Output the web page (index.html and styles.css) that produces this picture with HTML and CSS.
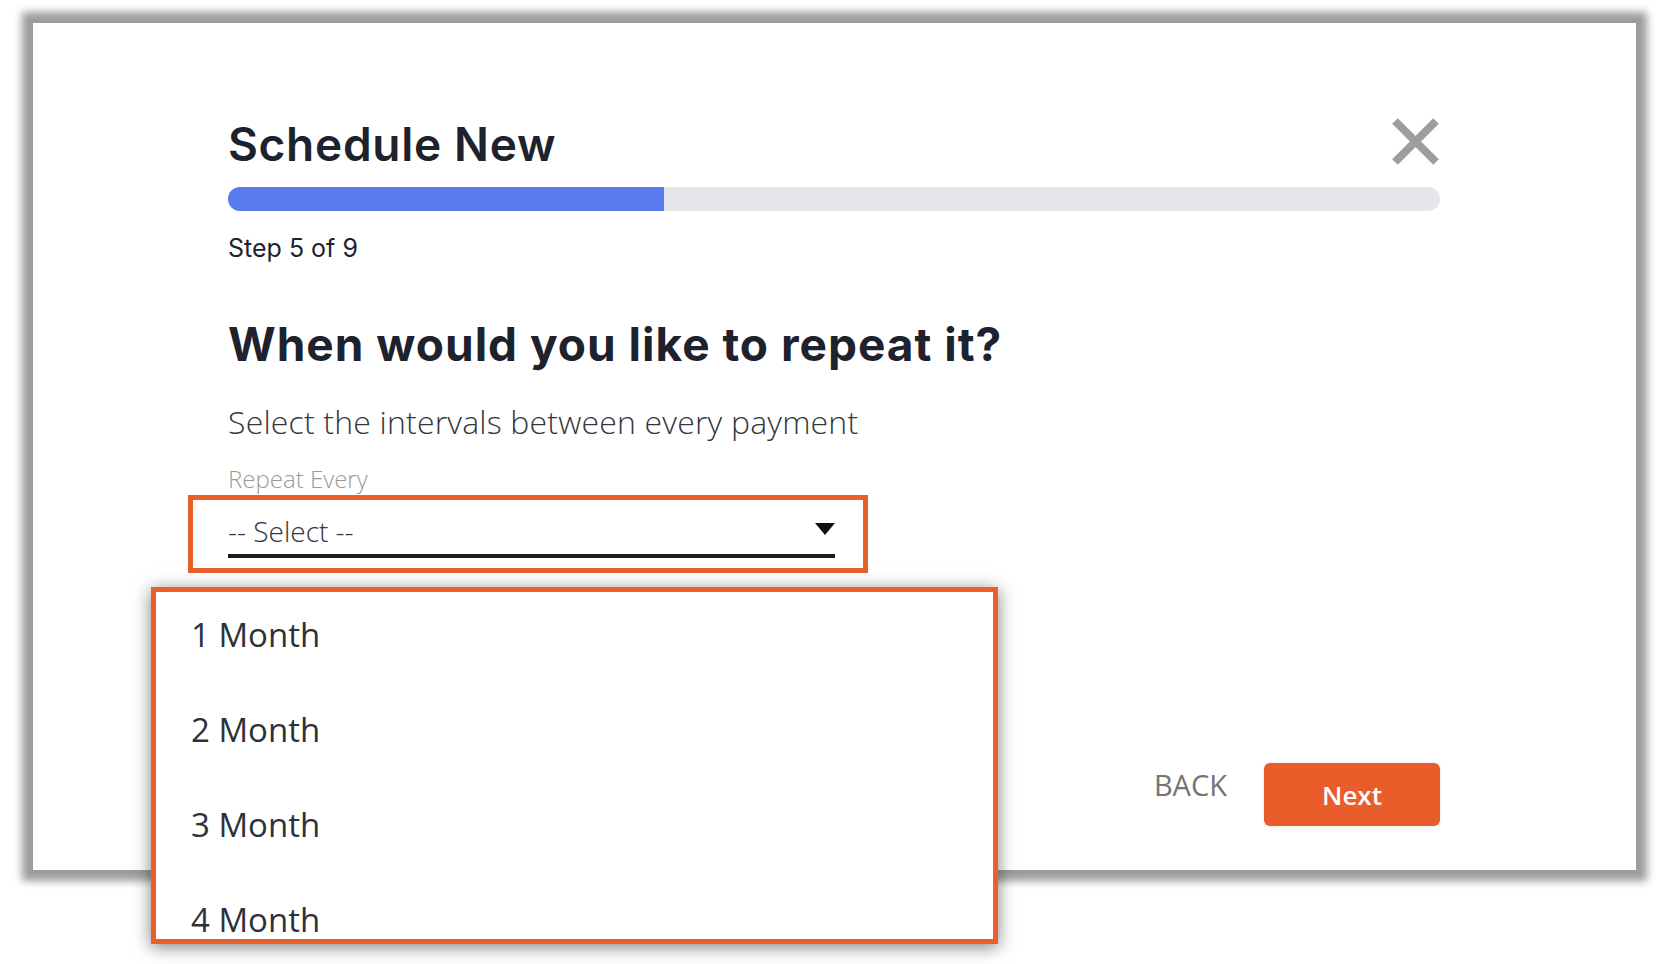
FILE: index.html
```html
<!DOCTYPE html>
<html lang="en">
<head>
  <meta charset="UTF-8" />
  <meta name="viewport" content="width=device-width, initial-scale=1.0"/>
  <title>Schedule New</title>
  <link rel="stylesheet" href="styles.css">
</head>
<body>

<div class="modal">
  <!-- Header -->
  <div class="modal-header">
    <h1>Schedule New</h1>
    <button class="close" aria-label="Close">
      <svg width="49" height="49" viewBox="0 0 49 49">
        <path d="M4 4 L45 45 M45 4 L4 45" stroke="#9d9d9d" stroke-width="8" fill="none"/>
      </svg>
    </button>
  </div>

  <!-- Progress -->
  <div class="progress"><div class="progress-fill" style="width: 36%;"></div></div>
  <div class="step">Step 5 of 9</div>

  <h2>When would you like to repeat it?</h2>
  <p class="subtitle">Select the intervals between every payment</p>

  <!-- Repeat interval -->
  <label class="field-label">Repeat Every</label>
  <div class="highlight">
    <div class="select">
      <span>-- Select --</span>
      <span class="arrow"></span>
    </div>

    <ul class="options">
      <li>1 Month</li>
      <li>2 Month</li>
      <li>3 Month</li>
      <li>4 Month</li>
    </ul>
  </div>

  <!-- Buttons -->
  <div class="actions">
    <button class="back">BACK</button>
    <button class="next">Next</button>
  </div>
</div>

</body>
</html>
```

FILE: styles.css
```css
* {
  box-sizing: border-box;
}
body {
  min-height: 964px;
  margin: 0;
  padding-top: 23px;
  background-color: #fff;
  font-family: "Open Sans", sans-serif;
  color: #2d3138;
}
.modal {
  height: 847px;
  margin: 0 32px 0 33px;
  padding: 93px 196px 0 195px;
  background-color: #fff;
  box-shadow: 0 0 8px 11px #9c9c9c;
}
.modal-header {
  display: flex;
  justify-content: space-between;
  align-items: flex-start;
}
h1 {
  margin: 0;
  font-family: Inter, sans-serif;
  font-size: 46px;
  font-weight: 600;
  line-height: 56px;
  letter-spacing: 0.7px;
  color: #1d222c;
}
.close {
  width: 49px;
  height: 49px;
  margin-top: 1px;
  padding: 0;
  border: none;
  background: none;
  cursor: pointer;
}
.close svg {
  display: block;
}
.progress {
  margin-top: 15px;
  height: 24px;
  border-radius: 12px;
  background-color: #e4e6ea;
  overflow: hidden;
}
.progress-fill {
  height: 100%;
  background-color: #5a7bf0;
}
.step {
  margin-top: 21px;
  font-family: Inter, sans-serif;
  font-size: 25px;
  font-weight: 400;
  line-height: 32px;
  color: #1f232b;
}
h2 {
  margin: 52px 0 0;
  font-family: Inter, sans-serif;
  font-size: 46px;
  font-weight: 700;
  line-height: 56px;
  letter-spacing: 1px;
  color: #1d222c;
}
.subtitle {
  margin: 28px 0 0;
  font-size: 32px;
  font-weight: 300;
  line-height: 44px;
  letter-spacing: 0.18px;
  color: #34373c;
}
.field-label {
  display: block;
  margin-top: 19px;
  font-size: 24px;
  font-weight: 300;
  line-height: 32px;
  color: #9a9a9a;
}
.highlight {
  position: relative;
  width: 680px;
  margin-left: -40px;
  padding: 13px 28px 10px 35px;
  border: 5px solid #e9602b;
}
.select {
  display: flex;
  justify-content: space-between;
  align-items: flex-start;
  padding-bottom: 5px;
  border-bottom: 4px solid #1c1c1c;
  font-size: 28px;
  font-weight: 300;
  line-height: 36px;
  color: #33363b;
}
.arrow {
  margin-top: 10px;
  border-left: 10px solid transparent;
  border-right: 10px solid transparent;
  border-top: 12px solid #111;
}
.options {
  position: absolute;
  left: -42px;
  top: 87px;
  z-index: 2;
  width: 847px;
  height: 357px;
  margin: 0;
  padding: 0;
  list-style: none;
  border: 5px solid #e9602b;
  background-color: #fff;
  box-shadow: 0 3px 16px rgba(0, 0, 0, 0.5);
  overflow: hidden;
}
.options li {
  padding: 0 0 10px 35px;
  font-size: 33px;
  line-height: 85px;
  color: #2d3138;
}
.actions {
  display: flex;
  justify-content: flex-end;
  align-items: flex-start;
  gap: 37px;
  margin-top: 190px;
}
button {
  font-family: inherit;
}
.back {
  margin-top: 2px;
  padding: 0;
  border: none;
  background: none;
  font-size: 29px;
  line-height: 40px;
  color: #747474;
  cursor: pointer;
}
.next {
  width: 176px;
  height: 63px;
  border: none;
  border-radius: 6px;
  background-color: #e95d2a;
  box-shadow: 0 0 3px rgba(0, 0, 0, 0.12);
  font-size: 26px;
  font-weight: 600;
  line-height: 63px;
  color: #fff;
  cursor: pointer;
}
```
